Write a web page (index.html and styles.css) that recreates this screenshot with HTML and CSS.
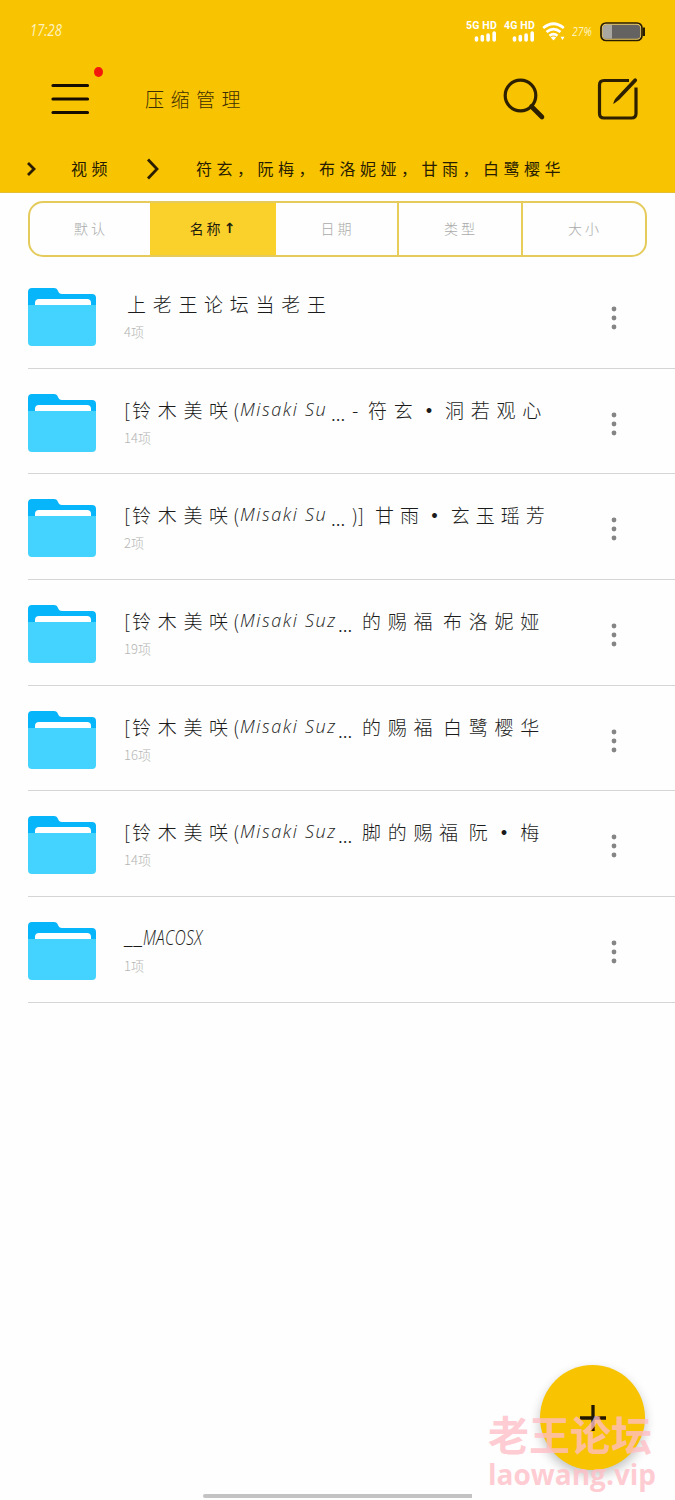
FILE: index.html
```html
<!DOCTYPE html>
<html lang="zh-CN">
<head>
<meta charset="utf-8">
<title>压缩管理</title>
<link rel="stylesheet" href="styles.css">
</head>
<body>
<svg class="defs" width="0" height="0" aria-hidden="true">
  <symbol id="folder" viewBox="0 0 68 58">
    <path d="M0 22V4Q0 0 4 0H26Q29 0 30 3Q31 6 34 6H64Q68 6 68 10V22Z" fill="#07b5fb"/>
    <path d="M7 19V15Q7 11 11 11H59Q63 11 63 15V19Z" fill="#fff"/>
    <path d="M0 17H68V54Q68 58 64 58H4Q0 58 0 54Z" fill="#44d3ff"/>
  </symbol>
  <symbol id="more" viewBox="0 0 6 24">
    <circle cx="3" cy="3" r="2.4"/><circle cx="3" cy="12" r="2.4"/><circle cx="3" cy="21" r="2.4"/>
  </symbol>
</svg>
<div class="screen">
  <header class="header">
    <div class="status">
      <span class="time">17:28</span>
      <div class="indicators">
        <div class="signal"><span>5G HD</span><svg width="24" height="11" viewBox="0 0 24 11"><path d="M3.5 7V9M9.3 5.500V9M15.1 4V9M21.2 2V9"/></svg></div>
        <div class="signal"><span>4G HD</span><svg width="24" height="11" viewBox="0 0 24 11"><path d="M3.5 7V9M9.3 5.500V9M15.1 4V9M21.2 2V9"/></svg></div>
        <svg class="wifi" width="24" height="20" viewBox="0 0 24 20"><path d="M1.200 6Q11.500-2.500 21.800 6M4.500 10Q11.500 4.200 18.500 10M7.500 13.700Q11.500 10.500 15.500 13.700" fill="none" stroke="#fff" stroke-width="2.700"/><path d="M8.800 15.500Q11.500 13.700 14.200 15.500L11.500 18.500ZM18.500 14.700h4L20.500 18Z" fill="#fff"/></svg>
        <span class="percent">27%</span>
        <svg class="battery" width="46" height="20" viewBox="0 0 46 20"><rect x="1" y="1" width="41" height="17.500" rx="5" fill="#f2cf62" stroke="#271c00" stroke-width="1.700"/><path d="M43 5.500H45V14H43Z" fill="#271c00"/><rect x="2.800" y="2.800" width="37.500" height="14" rx="3.500" fill="#656361"/><path d="M12 2.800H6.300Q2.800 2.800 2.800 6.300V13.300Q2.800 16.800 6.300 16.800H12Z" fill="#aaa6a0"/></svg>
      </div>
    </div>
    <div class="toolbar">
      <div class="menu">
        <svg width="40" height="34" viewBox="0 0 40 34"><path d="M3 3.500H37.500M3 17H37.500M3 30.500H37.500" stroke="#160d00" stroke-width="3.200" stroke-linecap="round"/></svg>
        <i class="badge"></i>
      </div>
      <h1>压缩管理</h1>
      <svg class="search" width="44" height="44" viewBox="0 0 44 44"><circle cx="18.500" cy="17.500" r="15.300"/><path d="M29.500 28.500L40 39" stroke-width="4.600"/></svg>
      <svg class="edit" width="42" height="42" viewBox="0 0 42 42"><path d="M32 2.500H7Q2.500 2.500 2.500 7V35.500Q2.500 40 7 40H34.500Q39 40 39 35.500V9.500"/><path class="pencil" d="M37 .8Q38.500-.2 39.600 1Q40.700 2.200 39.600 3.600L22.500 21.500L16.500 26Q16 24.500 18.500 20.500Z"/></svg>
    </div>
    <nav class="crumbs">
      <svg width="10" height="16" viewBox="0 0 10 16"><path d="M1 2L7 8L1 14"/></svg>
      <span class="parent">视频</span>
      <svg class="second" width="14" height="24" viewBox="0 0 14 24"><path d="M2 2.500L11 12L2 21.500"/></svg>
      <span>符玄，阮梅，布洛妮娅，甘雨，白鹭樱华</span>
    </nav>
  </header>

  <div class="tabs">
    <span>默认</span><span class="active">名称<b>↑</b></span><span>日期</span><span>类型</span><span>大小</span>
  </div>

  <main class="list">
    <div class="row"><svg class="folder"><use href="#folder"/></svg><div class="info"><div class="name indent">上老王论坛当老王</div><div class="count">4项</div></div><svg class="more"><use href="#more"/></svg></div>
    <div class="row"><svg class="folder"><use href="#folder"/></svg><div class="info"><div class="name"><span class="open">[</span><span class="artist">铃木美咲</span><span class="paren">(</span><span class="latin">Misaki</span><span class="latin su">Su</span><span class="dots">...</span><span class="dash">-</span>符玄<span class="mid">·</span>洞若观心</div><div class="count">14项</div></div><svg class="more"><use href="#more"/></svg></div>
    <div class="row"><svg class="folder"><use href="#folder"/></svg><div class="info"><div class="name tight"><span class="open">[</span><span class="artist">铃木美咲</span><span class="paren">(</span><span class="latin">Misaki</span><span class="latin su">Su</span><span class="dots">...</span><span class="close">)]</span>甘雨<span class="mid">·</span>玄玉瑶芳</div><div class="count">2项</div></div><svg class="more"><use href="#more"/></svg></div>
    <div class="row"><svg class="folder"><use href="#folder"/></svg><div class="info"><div class="name"><span class="open">[</span><span class="artist">铃木美咲</span><span class="paren">(</span><span class="latin">Misaki</span><span class="latin suz">Suz</span><span class="dots wide">...</span>的赐福<span class="gap"> </span>布洛妮娅</div><div class="count">19项</div></div><svg class="more"><use href="#more"/></svg></div>
    <div class="row"><svg class="folder"><use href="#folder"/></svg><div class="info"><div class="name"><span class="open">[</span><span class="artist">铃木美咲</span><span class="paren">(</span><span class="latin">Misaki</span><span class="latin suz">Suz</span><span class="dots wide">...</span>的赐福<span class="gap"> </span>白鹭樱华</div><div class="count">16项</div></div><svg class="more"><use href="#more"/></svg></div>
    <div class="row"><svg class="folder"><use href="#folder"/></svg><div class="info"><div class="name"><span class="open">[</span><span class="artist">铃木美咲</span><span class="paren">(</span><span class="latin">Misaki</span><span class="latin suz">Suz</span><span class="dots wide">...</span>脚的赐福<span class="gap"> </span>阮<span class="mid">·</span>梅</div><div class="count">14项</div></div><svg class="more"><use href="#more"/></svg></div>
    <div class="row"><svg class="folder"><use href="#folder"/></svg><div class="info"><div class="name"><span class="under">__</span><span class="mac">MACOSX</span></div><div class="count">1项</div></div><svg class="more"><use href="#more"/></svg></div>
  </main>

  <button class="fab" aria-label="添加"><svg width="28" height="28" viewBox="0 0 28 28"><path d="M14 1V27M1 14H27" stroke="#211600" stroke-width="3.300"/></svg></button>
  <div class="watermark"><span>老王论坛</span><span class="site">laowang.vip</span></div>
  <div class="home-bar"></div>
</div>
</body>
</html>
```
FILE: styles.css
```css
* { box-sizing: border-box; }
body { margin: 0; background: #fdfefd; font-family: "Noto Sans CJK SC", sans-serif; font-weight: 300; }
.defs { position: absolute; }
.screen { position: relative; width: 675px; height: 1500px; overflow: hidden; }
svg { display: block; flex: none; }

.header { height: 193px; background: #f8c301; border-bottom: 1px solid #e6be36; }
.status { height: 62px; padding: 0 30px; display: flex; justify-content: space-between; align-items: center; color: #fff3c0; }
.time { font: italic 400 15.5px "Open Sans", sans-serif; transform: scaleX(.84); transform-origin: left; margin-top: -2px; }
.indicators { display: flex; align-items: center; }
.signal { width: 31px; margin-right: 7px; display: flex; flex-direction: column; align-items: flex-end; font: bold 10.5px/11px Roboto, sans-serif; color: #fff; white-space: nowrap; letter-spacing: .2px; }
.signal path { stroke: #fff; stroke-width: 3.6; stroke-linecap: round; }
.wifi { margin-top: 1px; }
.percent { width: 28px; margin-left: 6px; font: italic 400 13px "Open Sans", sans-serif; transform: scaleX(.8); transform-origin: left; }
.battery { margin-top: 2px; margin-right: -1px; }
.toolbar { height: 75px; display: flex; align-items: center; padding-left: 50px; }
.menu { position: relative; width: 40px; margin-top: -1px; }
.badge { position: absolute; left: 44px; top: -15px; width: 9px; height: 10px; border-radius: 50%; background: #f2180c; }
h1 { width: 356px; margin: -2px 0 0 55px; font-size: 19px; line-height: 30px; font-weight: 300; letter-spacing: 6.5px; color: #3d2f02; }
.search, .edit { fill: none; stroke: #2c2000; stroke-width: 3.2; stroke-linecap: round; stroke-linejoin: round; }
.search { margin-left: 1px; }
.edit { margin-left: 51px; margin-top: -2px; stroke-linecap: butt; overflow: visible; }
.pencil { fill: #2c2000; stroke: none; }
.crumbs { height: 55px; display: flex; align-items: center; padding: 8px 0 0 27px; font-size: 16px; letter-spacing: 4.5px; color: #271c00; font-weight: 400; white-space: nowrap; }
.crumbs span { margin-top: -1px; }
.crumbs svg { fill: none; stroke: #2b1e00; stroke-width: 2.8; }
.parent { width: 75px; margin-left: 34px; }
.second { margin-right: 36px; }

.tabs { display: grid; grid-template-columns: 122px 124px 123px 124px 1fr; width: 619px; height: 56px; margin: 8px 0 0 28px; border: 2px solid #e5cb5c; border-radius: 15px; overflow: hidden; font-size: 14px; letter-spacing: 3px; color: #aaa; }
.tabs span { display: flex; align-items: center; justify-content: center; padding: 0 0 2px 2px; border-right: 2px solid #e8cd58; }
.tabs span:first-child { border-color: #fad02b; }
.tabs span:last-child { border-right: 0; }
.tabs .active { background: #fad02b; border-color: #fad02b; color: #211c0d; font-weight: 400; }
.tabs b { font: bold 14px "DejaVu Sans", sans-serif; }

.list { padding-top: 6px; }
.row { height: 105.67px; margin-left: 28px; border-bottom: 1px solid #d4d6d5; display: flex; }
.folder { width: 68px; height: 58px; margin-top: 25px; }
.info { width: 514px; padding: 26px 0 0 28px; }
.name { height: 31px; line-height: 29px; font-size: 19px; letter-spacing: 6.7px; color: #1b1b1b; white-space: nowrap; display: flex; }
.indent { padding-left: 3px; }
.tight { letter-spacing: 6px; }
.open { width: 8px; letter-spacing: 0; }
.artist { width: 101px; letter-spacing: 6.7px; }
.paren { width: 7px; letter-spacing: 0; }
.latin { width: 65px; font-family: "Open Sans", sans-serif; font-style: italic; font-size: 18px; letter-spacing: 1.6px; }
.su { width: 26px; }
.suz { width: 33px; }
.dots { width: 21px; letter-spacing: 0; padding-top: 3px; }
.dots.wide { width: 24px; }
.dash { width: 16px; letter-spacing: 0; }
.close { width: 23px; letter-spacing: 0; }
.mid { width: 25.7px; padding-right: 7px; text-align: center; letter-spacing: 0; font-weight: 700; }
.gap { width: 4px; }
.under { width: 19px; font: 15px/31px "Liberation Sans", sans-serif; letter-spacing: 1.2px; }
.mac { font: italic 300 20px/29px "Open Sans", sans-serif; letter-spacing: .4px; transform: scaleX(.78); transform-origin: left; }
.count { height: 24px; line-height: 24px; font-size: 13px; color: #b5b5b5; }
.more { width: 6px; height: 24px; margin: 43px 0 0 1px; fill: #858585; }

.fab { position: absolute; left: 540px; top: 1365px; width: 105px; height: 105px; padding: 0; border: 0; border-radius: 50%; background: #f8c301; box-shadow: 0 5px 11px rgba(0,0,0,.24); display: flex; align-items: center; justify-content: center; }
.watermark { position: absolute; left: 488px; top: 1408px; display: flex; flex-direction: column; color: rgba(255,190,198,.8); font-weight: 700; font-size: 41px; line-height: 51px; white-space: nowrap; }
.site { font-family: "Open Sans", sans-serif; font-size: 28px; line-height: 30px; }
.home-bar { position: absolute; left: 203px; top: 1494px; width: 269px; height: 4px; border-radius: 2px 0 0 2px; background: #c3c3c3; }
```
